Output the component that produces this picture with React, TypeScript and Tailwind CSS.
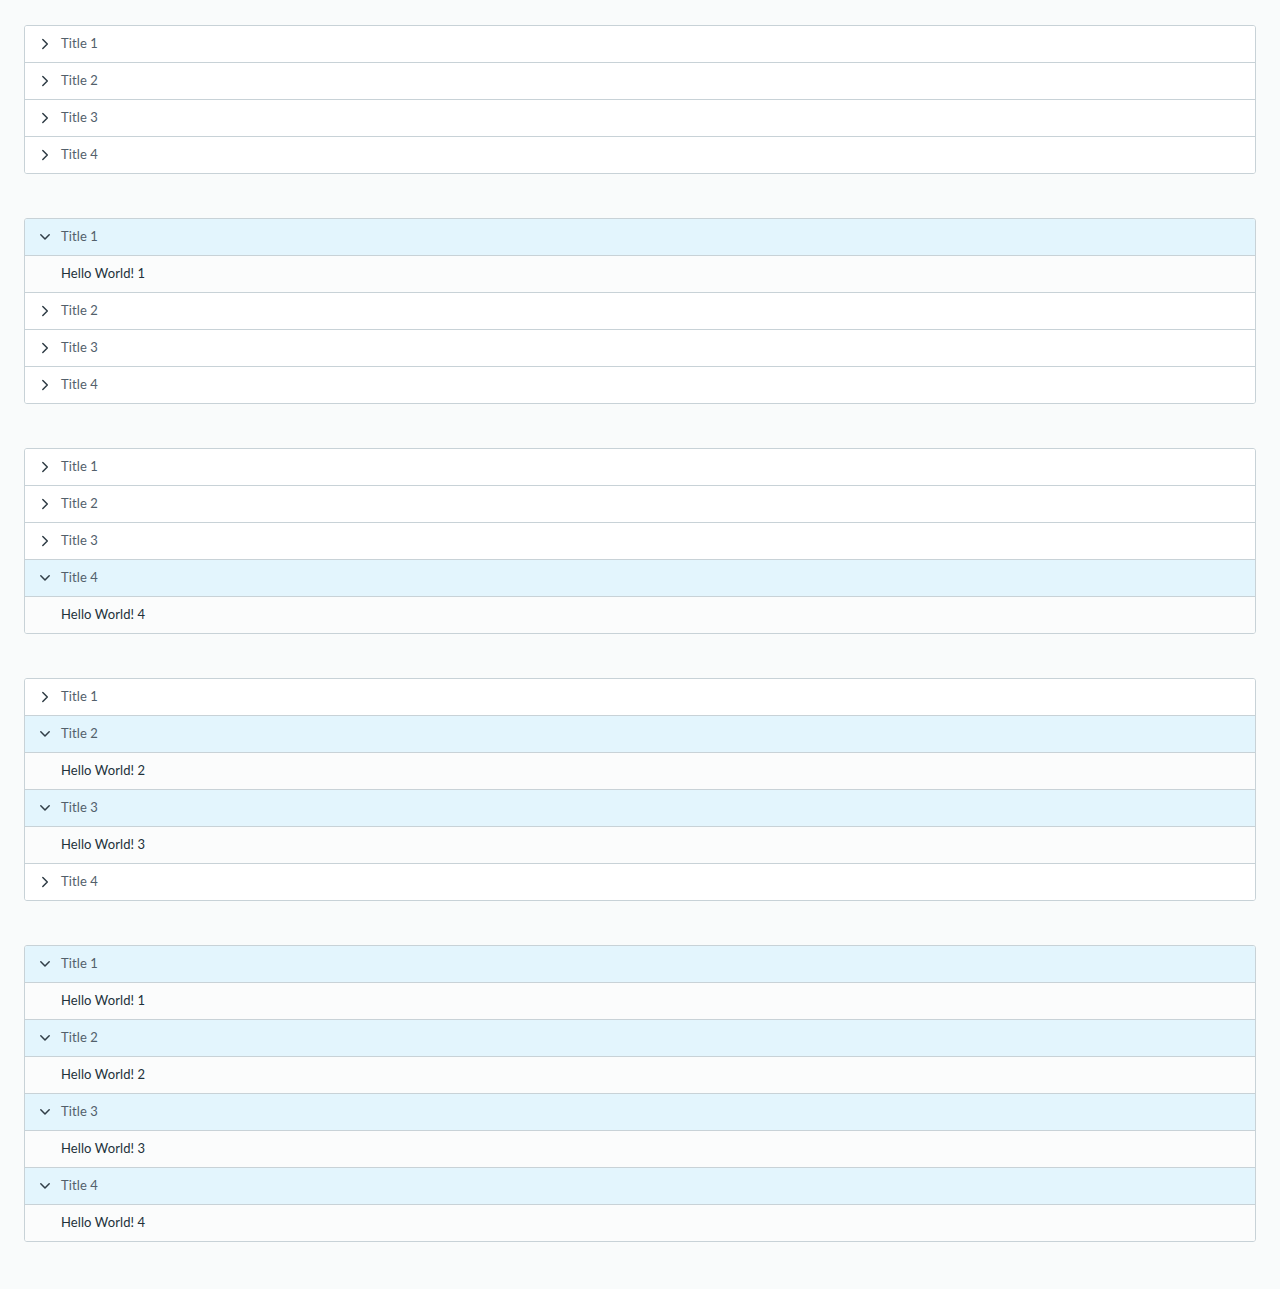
import React from "react";

const Chevron = ({ open }: { open: boolean }) => (
  <svg width="12" height="12" viewBox="0 0 12 12" className="shrink-0" fill="none" stroke="#313e47" strokeWidth="1.5" strokeLinecap="round" strokeLinejoin="round">
    {open ? <path d="M1.8 3.8 L6 8 L10.2 3.8" /> : <path d="M3.8 1.5 L8.3 6 L3.8 10.5" />}
  </svg>
);

const Accordion = ({ opens }: { opens: boolean[] }) => (
  <div className="border border-[#c8d2d7] rounded-[3px] overflow-hidden bg-white">
    {opens.map((open, i) => (
      <div key={i} className={i > 0 ? "border-t border-[#c8d2d7]" : ""}>
        <div className={`h-9 flex items-center pl-[14px] gap-[10px] ${open ? "bg-[#e3f5fd]" : "bg-white"}`}>
          <Chevron open={open} />
          <span className="text-[13px] text-[#52606b] tracking-[0.1px]">Title {i + 1}</span>
        </div>
        {open && (
          <div className="h-[37px] border-t border-[#c8d2d7] bg-[#fbfcfc] flex items-center pl-[36px]">
            <span className="text-[13px] text-[#22313a] tracking-[0.1px]">Hello World! {i + 1}</span>
          </div>
        )}
      </div>
    ))}
  </div>
);

export default function App() {
  const sets: boolean[][] = [
    [false, false, false, false],
    [true, false, false, false],
    [false, false, false, true],
    [false, true, true, false],
    [true, true, true, true],
  ];
  return (
    <div className="min-h-[1289px] bg-[#f9fbfb] px-6 pt-[25px] pb-12 flex flex-col gap-[44px]" style={{ fontFamily: "Lato, 'Open Sans', sans-serif" }}>
      {sets.map((s, i) => (
        <Accordion key={i} opens={s} />
      ))}
    </div>
  );
}
